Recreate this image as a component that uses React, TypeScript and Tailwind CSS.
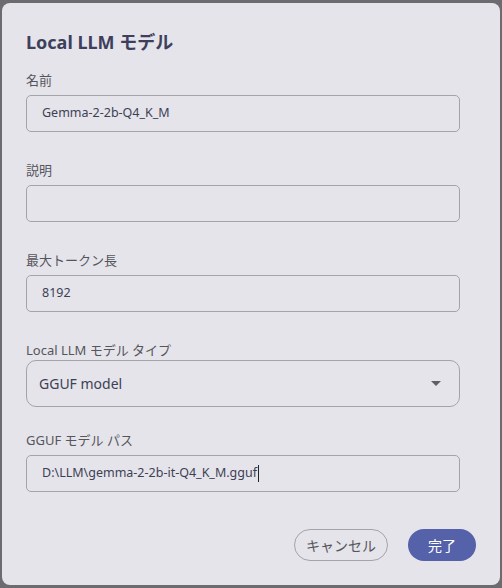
const fieldFont = { fontFamily: '"Noto Sans", "Noto Sans CJK JP", sans-serif' };

const TextField = ({
  label,
  value,
  cursor,
}: {
  label: string;
  value?: string;
  cursor?: boolean;
}) => (
  <div className="flex flex-col">
    <label className="h-5 text-[13px] leading-5 text-[#55555c]">{label}</label>
    <div className="mt-[5px] flex h-[37px] items-center rounded-[5px] border border-[#a3a3aa] pl-[15px] text-[12.5px] text-[#3d3f55]">
      <span>{value}</span>
      {cursor && <span className="ml-px h-[17px] w-px bg-[#222]" />}
    </div>
  </div>
);

const App = () => {
  return (
    <div
      className="h-[588px] w-[502px] bg-[#6b6b70] px-[2px] pt-[3px]"
      style={fieldFont}
    >
      <div className="flex h-[582px] flex-col rounded-lg bg-[#e5e4ea] px-6 pt-[25px]">
        <h1 className="h-7 text-[18px] font-bold leading-7 text-[#3d3f5c]">
          Local LLM モデル
        </h1>

        <div className="mt-[14px] flex w-[434px] flex-col gap-[28px]">
          <TextField label="名前" value="Gemma-2-2b-Q4_K_M" />
          <TextField label="説明" />
          <TextField label="最大トークン長" value="8192" />

          <div className="flex flex-col">
            <label className="h-5 text-[13px] leading-5 text-[#55555c]">
              Local LLM モデル タイプ
            </label>
            <div className="flex h-[47px] items-center justify-between rounded-[10px] border border-[#a3a3aa] pl-3 pr-[18px] text-[14px] text-[#3d3f55]">
              <span>GGUF model</span>
              <svg width="10" height="5" viewBox="0 0 10 5">
                <path d="M0 0h10L5 5z" fill="#5f5f64" />
              </svg>
            </div>
          </div>
        </div>

        <div className="mt-[23px] w-[434px]">
          <TextField
            label="GGUF モデル パス"
            value="D:\LLM\gemma-2-2b-it-Q4_K_M.gguf"
            cursor
          />
        </div>

        <div className="mt-[37px] flex justify-end gap-5">
          <button className="h-8 w-[94px] rounded-full border border-[#a3a3aa] text-[14px] text-[#55555c]">
            キャンセル
          </button>
          <button className="h-8 w-[68px] rounded-full bg-[#5561a9] text-[14px] text-white">
            完了
          </button>
        </div>
      </div>
    </div>
  );
};

export default App;
